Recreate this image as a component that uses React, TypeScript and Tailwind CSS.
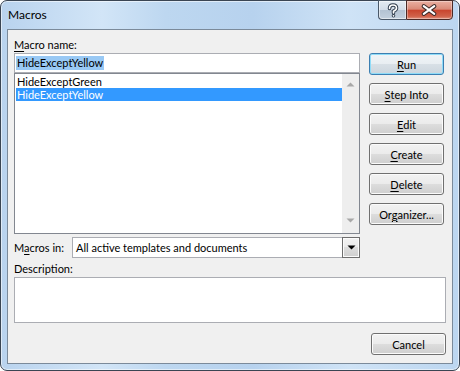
import React from "react";

const font = { fontFamily: "Lato, 'Liberation Sans', sans-serif" };

function Btn({ children, def }: { children: React.ReactNode; def?: boolean }) {
  return (
    <div
      className={
        def
          ? "w-[75px] h-[22px] rounded-[3px] border border-[#3c7fb1] shadow-[inset_0_0_0_1px_#8fdcf8] bg-[linear-gradient(#f0f4f7_0%,#e8eef2_50%,#d8e0e6_50%,#ccd6de_100%)] flex items-center justify-center text-[11px] leading-none text-black"
          : "w-[75px] h-[22px] rounded-[3px] border border-[#707070] shadow-[inset_0_0_0_1px_#fbfbfb] bg-[linear-gradient(#f2f2f2_0%,#ebebeb_50%,#dddddd_50%,#cfcfcf_100%)] flex items-center justify-center text-[11px] leading-none text-black"
      }
    >
      {children}
    </div>
  );
}

function UpArrow() {
  return (
    <svg width="9" height="5" viewBox="0 0 9 5">
      <path d="M0.5 4.5 L4.5 0.5 L8.5 4.5 Z" fill="#a8a8a8" />
    </svg>
  );
}
function DownArrow({ color }: { color: string }) {
  return (
    <svg width="9" height="5" viewBox="0 0 9 5">
      <path d="M0.5 0.5 L4.5 4.5 L8.5 0.5 Z" fill={color} />
    </svg>
  );
}

export default function App() {
  return (
    <div className="w-[460px] h-[371px] bg-white text-black" style={font}>
      <div className="relative w-[460px] h-[371px] rounded-[7px] border border-[#3a4553] shadow-[inset_0_0_0_1px_rgba(255,255,255,0.55)] bg-[linear-gradient(to_right,#b9d3ee_0%,#d2e5f7_22%,#bdd7f0_36%,#b7d2ee_55%,#cfe3f6_76%,#bcd6f0_100%)] flex flex-col">
        {/* title bar */}
        <div className="h-[28px] flex items-center pl-[7px] pb-[1px] text-[12px] text-black leading-none">
          Macros
        </div>
        {/* caption buttons */}
        <div className="absolute top-[-1px] right-[6px] flex h-[20px]">
          <div className="w-[28px] h-[20px] rounded-bl-[4px] border border-[#4a5868] border-r-0 bg-[linear-gradient(#e4ebf2_0%,#d3dde8_48%,#b4c3d3_52%,#c3d0de_100%)] shadow-[inset_0_0_0_1px_rgba(255,255,255,0.5)] flex items-center justify-center">
            <svg width="27" height="19" viewBox="0 0 27 19">
              <path d="M10.5 7.5 Q10.5 4 14 4 Q17.5 4 17.5 7 Q17.5 9 14.5 10.2 L14.5 12" fill="none" stroke="#2f3c4c" strokeWidth="3.6" strokeLinecap="round" />
              <circle cx="14.5" cy="14.8" r="1.8" fill="#2f3c4c" />
              <path d="M10.5 7.5 Q10.5 4 14 4 Q17.5 4 17.5 7 Q17.5 9 14.5 10.2 L14.5 12" fill="none" stroke="#ffffff" strokeWidth="1.6" strokeLinecap="round" />
              <circle cx="14.5" cy="14.8" r="0.9" fill="#ffffff" />
            </svg>
          </div>
          <div className="w-[47px] h-[20px] rounded-br-[4px] border border-[#4a2a26] bg-[linear-gradient(#eab0a2_0%,#d98a78_45%,#c9462f_52%,#d0624a_85%,#e0937f_100%)] shadow-[inset_0_0_0_1px_rgba(255,255,255,0.35)] flex items-center justify-center">
            <svg width="47" height="19" viewBox="0 0 47 19">
              <path d="M17.5 5 L28.5 13 M28.5 5 L17.5 13" stroke="#3b2a28" strokeWidth="4.4" strokeLinecap="round" />
              <path d="M17.5 5 L28.5 13 M28.5 5 L17.5 13" stroke="#ffffff" strokeWidth="2.2" strokeLinecap="round" />
            </svg>
          </div>
        </div>
        {/* client area */}
        <div className="mx-[6px] h-[335px] border border-[#7b8a9a] bg-[#f0f0f0] flex flex-col">
          <div className="flex">
            <div className="ml-[6px] w-[346px] flex flex-col pt-[7px]">
              <div className="h-[15px] leading-[15px] text-[11px]">
                <span className="underline underline-offset-2">M</span>acro name:
              </div>
              <div className="mt-[1px] h-[20px] border border-[#abadb3] bg-white flex items-center pl-[1px]">
                <span className="bg-[#99c9f5] text-[11px] leading-[14px] px-[1px]">HideExceptYellow</span>
              </div>
              <div className="h-[161px] border border-[#828790] bg-white flex">
                <div className="flex-1 pt-[1px] pl-[1px] flex flex-col">
                  <div className="h-[13px] leading-[13px] text-[11px] pl-[1px]">HideExceptGreen</div>
                  <div className="h-[13px] leading-[13px] text-[11px] pl-[1px] bg-[#3399ff] text-white">HideExceptYellow</div>
                </div>
                <div className="w-[17px] bg-[#eeeeee] flex flex-col items-center justify-between pt-[8px] pb-[10px]">
                  <UpArrow />
                  <DownArrow color="#a8a8a8" />
                </div>
              </div>
            </div>
            <div className="ml-[9px] pt-[23px] flex flex-col gap-[8px]">
              <Btn def>
                <span className="underline underline-offset-2">R</span>un
              </Btn>
              <Btn>
                <span className="underline underline-offset-2">S</span>tep Into
              </Btn>
              <Btn>
                <span className="underline underline-offset-2">E</span>dit
              </Btn>
              <Btn>
                <span className="underline underline-offset-2">C</span>reate
              </Btn>
              <Btn>
                <span className="underline underline-offset-2">D</span>elete
              </Btn>
              <Btn>
                Or<span className="underline underline-offset-2">g</span>anizer...
              </Btn>
            </div>
          </div>
          {/* macros in */}
          <div className="mt-[3px] ml-[6px] flex items-center h-[21px]">
            <div className="w-[58px] text-[11px] leading-none">
              M<span className="underline underline-offset-2">a</span>cros in:
            </div>
            <div className="w-[288px] h-[21px] flex">
              <div className="flex-1 border-y border-l border-[#abadb3] bg-white flex items-center pl-[3px] text-[11px] leading-none">
                All active templates and documents
              </div>
              <div className="w-[18px] border border-[#6e6e6e] bg-[linear-gradient(#f2f2f2_0%,#ebebeb_50%,#dddddd_50%,#cfcfcf_100%)] shadow-[inset_0_0_0_1px_#fbfbfb] flex items-center justify-center">
                <DownArrow color="#000000" />
              </div>
            </div>
          </div>
          <div className="mt-[3px] ml-[6px] h-[15px] leading-[15px] text-[11px]">Description:</div>
          <div className="mt-[1px] ml-[6px] w-[432px] h-[46px] border border-[#abadb3] bg-white" />
          <div className="mt-[10px] flex justify-end pr-[6px]">
            <Btn>Cancel</Btn>
          </div>
        </div>
      </div>
    </div>
  );
}
